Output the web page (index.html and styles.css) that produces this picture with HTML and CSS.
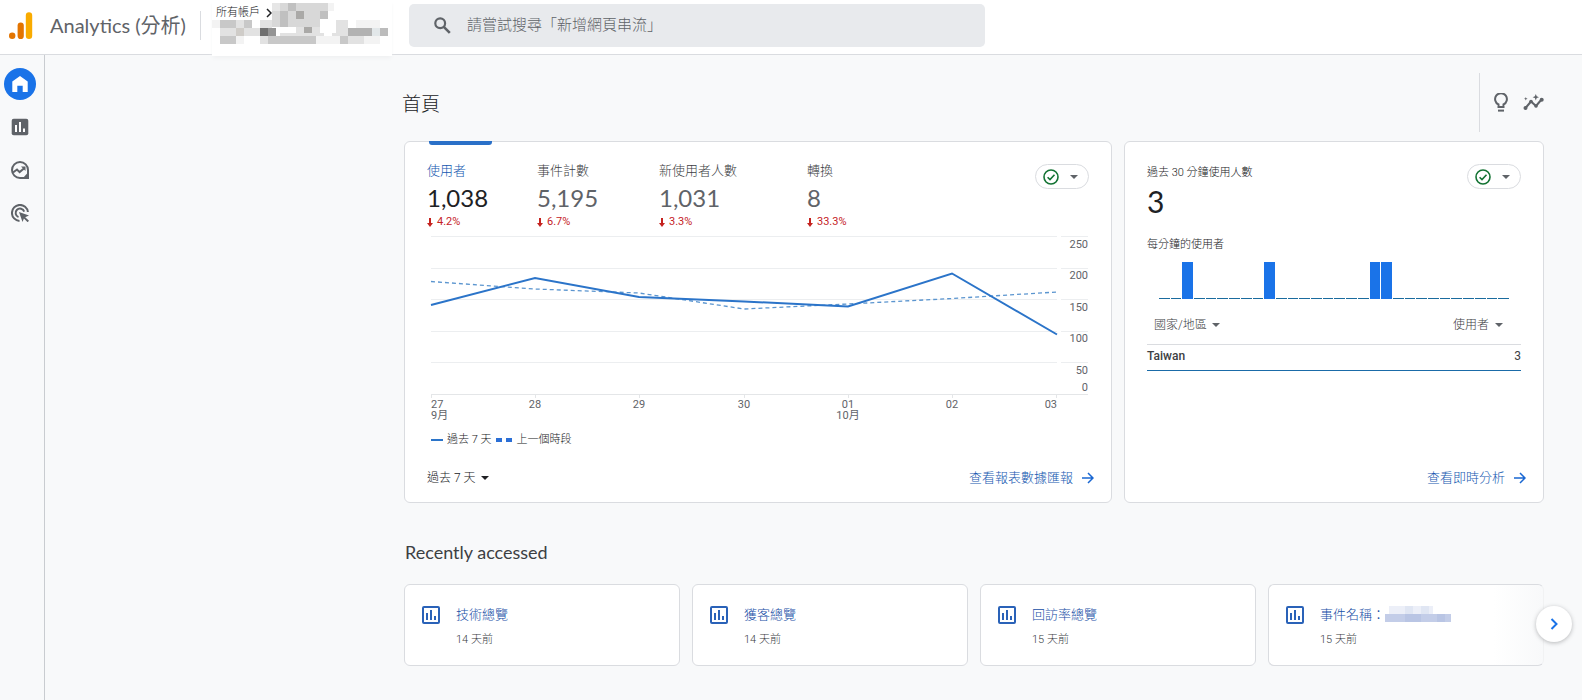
FILE: index.html
```html
<!DOCTYPE html>
<html lang="zh-Hant">
<head>
<meta charset="utf-8">
<title>Analytics (分析)</title>
<meta name="viewport" content="width=device-width, initial-scale=1">
<link rel="stylesheet" href="styles.css">
</head>
<body>
<svg class="defs" aria-hidden="true">
  <symbol id="caret" viewBox="0 0 8 4"><path d="M0 0h8L4 4z" fill="currentColor"/></symbol>
  <symbol id="arrow" viewBox="0 0 12 12"><path d="M0 6h11M6 1l5 5-5 5" fill="none" stroke="currentColor" stroke-width="1.5"/></symbol>
  <symbol id="down" viewBox="0 0 6 9"><path d="M2 0h2v5H6L3 9 0 5h2z" fill="currentColor"/></symbol>
  <symbol id="check" viewBox="0 0 16 16"><circle cx="8" cy="8" r="7" fill="none" stroke="currentColor" stroke-width="1.6"/><path d="M4.6 8.2l2.4 2.4 4.5-4.8" fill="none" stroke="currentColor" stroke-width="1.6"/></symbol>
  <symbol id="report" viewBox="0 0 18 18"><rect x="1" y="1" width="16" height="16" rx="1" fill="none" stroke="currentColor" stroke-width="2"/><path d="M4 7h2v7H4zM8 4h2v10H8zM12 10h2v4h-2z" fill="currentColor"/></symbol>
</svg>

<header class="topbar">
  <a class="brand" href="#">
    <svg class="brand-logo" viewBox="0 0 24 28" aria-hidden="true"><circle cx="3.2" cy="23.7" r="3.2" fill="#e37400"/><rect x="8.6" y="10.5" width="6.2" height="16.5" rx="3.1" fill="#e37400"/><rect x="16.8" y="0.3" width="6.4" height="26.7" rx="3.2" fill="#f9ab00"/></svg>
    <span>Analytics (分析)</span>
  </a>
  <button class="account" type="button">
    <span class="account-path">所有帳戶
      <svg class="account-chevron" viewBox="0 0 6 10" aria-hidden="true"><path d="M1 1l4 4-4 4" fill="none" stroke="currentColor" stroke-width="1.5"/></svg>
    </span>
    <svg class="account-mask" viewBox="0 0 180 44" shape-rendering="crispEdges" aria-hidden="true">
      <g fill="#c8c8c8"><rect x="8" y="20" width="16" height="8"/><rect x="32" y="20" width="8" height="8"/><rect x="8" y="36" width="16" height="8"/><rect x="56" y="36" width="48" height="8"/><rect x="128" y="36" width="8" height="8"/></g>
      <g fill="#e2e2e2"><rect x="24" y="20" width="8" height="8"/><rect x="8" y="28" width="16" height="8"/><rect x="32" y="28" width="8" height="8"/><rect x="40" y="28" width="8" height="8"/><rect x="48" y="20" width="12" height="8"/><rect x="68" y="27" width="44" height="9"/><rect x="120" y="28" width="20" height="8"/><rect x="124" y="20" width="12" height="8"/><rect x="48" y="36" width="8" height="8"/><rect x="136" y="36" width="16" height="8"/></g>
      <g fill="#f3f3f3"><rect x="0" y="20" width="8" height="8"/><rect x="24" y="36" width="8" height="8"/><rect x="104" y="36" width="24" height="8"/><rect x="144" y="20" width="24" height="8"/><rect x="152" y="36" width="16" height="8"/><rect x="112" y="3" width="10" height="8"/></g>
      <rect x="24" y="28" width="8" height="8" fill="#cfccc8"/>
      <rect x="48" y="28" width="8" height="8" fill="#707070"/><rect x="56" y="28" width="8" height="8" fill="#949494"/>
      <rect x="136" y="28" width="24" height="8" fill="#b2b2b2"/><rect x="160" y="28" width="8" height="8" fill="#e2e7e9"/><rect x="168" y="28" width="8" height="8" fill="#bcbcbc"/>
      <rect x="60" y="3" width="56" height="24" fill="#d8d8d8"/>
      <g fill="#c0c0c0"><rect x="76" y="3" width="8" height="8"/><rect x="68" y="11" width="8" height="8"/><rect x="68" y="19" width="8" height="8"/><rect x="108" y="11" width="8" height="8"/></g>
      <g fill="#aaa9a7"><rect x="84" y="11" width="8" height="8"/><rect x="92" y="27" width="8" height="6"/></g>
      <rect x="60" y="3" width="8" height="8" fill="#e6e6e6"/>
      <rect x="68" y="27" width="16" height="6" fill="#fff"/><rect x="108" y="19" width="16" height="14" fill="#fff"/>
    </svg>
  </button>
  <form class="search" role="search">
    <svg class="search-icon" viewBox="0 0 17 17" aria-hidden="true"><circle cx="6.2" cy="6.2" r="4.9" fill="none" stroke="currentColor" stroke-width="2.2"/><path d="M9.8 9.8l6 6" stroke="currentColor" stroke-width="2.6"/></svg>
    <input class="search-input" type="search" aria-label="搜尋" placeholder="請嘗試搜尋「新增網頁串流」">
  </form>
</header>

<div class="shell">
  <nav class="rail" aria-label="主選單">
    <a class="rail-item rail-item-active" href="#" aria-label="首頁"><svg class="rail-icon" viewBox="0 0 18 18" aria-hidden="true"><path d="M1.3 17V6.4L9 1l7.700 5.400V17H11.700V10.700H6.300V17z" fill="currentColor"/></svg></a>
    <a class="rail-item" href="#" aria-label="報表"><svg class="rail-icon" viewBox="0 0 18 18" aria-hidden="true"><rect x=".7" y=".7" width="16.600" height="16.600" rx="2" fill="#5f6368"/><path d="M4 7h2v7H4zM8 4h2v10H8zM12 10.500h2V14h-2z" fill="#fff"/></svg></a>
    <a class="rail-item" href="#" aria-label="探索"><svg class="rail-icon" viewBox="0 0 18 18" aria-hidden="true"><path d="M9 1a8 8 0 1 0 0 16h8V9a8 8 0 0 0-8-8z" fill="none" stroke="currentColor" stroke-width="2"/><path d="M16.500 12v5H12z" fill="currentColor"/><path d="M2 11.500l4-3 2.600 2.600L13.500 7" fill="none" stroke="currentColor" stroke-width="2"/><path d="M10 5.500h4.500V10z" fill="currentColor"/></svg></a>
    <a class="rail-item" href="#" aria-label="廣告"><svg class="rail-icon" viewBox="0 0 18 18" aria-hidden="true"><path d="M8.500 16.900A8 8 0 1 1 16.900 8" fill="none" stroke="currentColor" stroke-width="2"/><path d="M7.500 13.100A4.400 4.400 0 1 1 13.200 7.600" fill="none" stroke="currentColor" stroke-width="2"/><path d="M8 8l10 3.500-3.800 1.700 3.800 3.600-1.400 1.400-3.700-3.700L11.500 18z" fill="currentColor"/></svg></a>
  </nav>

  <main class="page">
    <div class="page-head">
      <h1 class="page-title">首頁</h1>
      <div class="page-tools">
        <button class="tool" type="button" aria-label="提示"><svg class="tool-bulb" viewBox="0 0 14 19" aria-hidden="true"><path d="M4.500 14v-2.500A5.900 5.900 0 1 1 9.500 11.500V14z" fill="none" stroke="currentColor" stroke-width="2"/><path d="M4 17.600h6" stroke="currentColor" stroke-width="2"/></svg></button>
        <button class="tool" type="button" aria-label="深入分析"><svg class="tool-insights" viewBox="0 0 21 17" aria-hidden="true"><path d="M2.500 14l5.500-6.500 5 4.500 5.500-6.500" fill="none" stroke="currentColor" stroke-width="2"/><g fill="currentColor"><circle cx="2.500" cy="14" r="2"/><circle cx="8" cy="7.500" r="1.800"/><circle cx="13" cy="12" r="1.800"/><circle cx="18.700" cy="5.800" r="2"/><path d="M12.800 0l.9 2.300 2.300.9-2.300.9-.9 2.300-.9-2.300-2.300-.9 2.300-.9zM2.800 3l.5 1.300 1.300.5-1.300.5-.5 1.300-.5-1.300L1 4.800l1.300-.5z"/></g></svg></button>
      </div>
    </div>

    <div class="cards">
      <section class="card overview">
        <div class="overview-head">
          <div class="metrics" role="tablist">
            <button class="metric metric-active" type="button" role="tab" aria-selected="true"><span class="metric-label">使用者</span><span class="metric-value">1,038</span><span class="metric-delta"><svg class="down" aria-hidden="true"><use href="#down"/></svg>4.2%</span></button>
            <button class="metric" type="button" role="tab"><span class="metric-label">事件計數</span><span class="metric-value">5,195</span><span class="metric-delta"><svg class="down" aria-hidden="true"><use href="#down"/></svg>6.7%</span></button>
            <button class="metric" type="button" role="tab"><span class="metric-label">新使用者人數</span><span class="metric-value">1,031</span><span class="metric-delta"><svg class="down" aria-hidden="true"><use href="#down"/></svg>3.3%</span></button>
            <button class="metric" type="button" role="tab"><span class="metric-label">轉換</span><span class="metric-value">8</span><span class="metric-delta"><svg class="down" aria-hidden="true"><use href="#down"/></svg>33.3%</span></button>
          </div>
          <button class="status" type="button" aria-label="資料狀態"><svg class="status-check" aria-hidden="true"><use href="#check"/></svg><svg class="caret" aria-hidden="true"><use href="#caret"/></svg></button>
        </div>
        <svg class="trend" viewBox="0 0 662 190" role="img" aria-label="過去 7 天的使用者">
          <path class="grid" d="M4 1.500h626M634 1.500h27M4 33.500h626M634 33.500h27M4 64.500h626M634 64.500h27M4 96.500h626M634 96.500h27M4 127.500h626M634 127.500h27"/>
          <path class="axis" d="M4 159.500h657M4.500 159v4M108.500 159v4M212.500 159v4M317.500 159v4M421.500 159v4M525.500 159v4M629.500 159v4"/>
          <path class="line-prev" d="M4 46.500L108 54L212 58L317 74L421 69L525 63.500L630 57"/>
          <path class="line-now" d="M4 70L108 43L212 62L317 66.500L421 71.500L525 38.500L630 99.500"/>
          <g class="ticks ticks-end"><text x="661" y="13">250</text><text x="661" y="44">200</text><text x="661" y="76">150</text><text x="661" y="107">100</text><text x="661" y="139">50</text><text x="661" y="156">0</text><text x="630" y="173">03</text></g>
          <g class="ticks"><text x="4" y="173">27</text><text x="4" y="184">9月</text></g>
          <g class="ticks ticks-mid"><text x="108" y="173">28</text><text x="212" y="173">29</text><text x="317" y="173">30</text><text x="421" y="173">01</text><text x="421" y="184">10月</text><text x="525" y="173">02</text></g>
        </svg>
        <div class="legend">
          <span class="legend-item"><i class="key"></i>過去 7 天</span>
          <span class="legend-item"><i class="key key-dashed"></i>上一個時段</span>
        </div>
        <div class="card-foot">
          <label class="picker"><select class="picker-select" aria-label="日期範圍"><option>過去 7 天</option></select><svg class="caret" aria-hidden="true"><use href="#caret"/></svg></label>
          <a class="more" href="#">查看報表數據匯報<svg class="arrow" aria-hidden="true"><use href="#arrow"/></svg></a>
        </div>
      </section>

      <section class="card realtime">
        <div class="realtime-head">
          <div>
            <h2 class="realtime-label">過去 30 分鐘使用人數</h2>
            <p class="realtime-value">3</p>
          </div>
          <button class="status" type="button" aria-label="資料狀態"><svg class="status-check" aria-hidden="true"><use href="#check"/></svg><svg class="caret" aria-hidden="true"><use href="#caret"/></svg></button>
        </div>
        <h3 class="realtime-label">每分鐘的使用者</h3>
        <div class="minutes">
          <i></i><i></i><i class="on"></i><i></i><i></i><i></i><i></i><i></i><i></i><i class="on"></i><i></i><i></i><i></i><i></i><i></i><i></i><i></i><i></i><i class="on"></i><i class="on"></i><i></i><i></i><i></i><i></i><i></i><i></i><i></i><i></i><i></i><i></i>
        </div>
        <table class="countries">
          <thead><tr>
            <th><label class="picker picker-soft"><select class="picker-select" aria-label="維度"><option>國家/地區</option></select><svg class="caret" aria-hidden="true"><use href="#caret"/></svg></label></th>
            <th class="num"><label class="picker picker-soft"><select class="picker-select" aria-label="指標"><option>使用者</option></select><svg class="caret" aria-hidden="true"><use href="#caret"/></svg></label></th>
          </tr></thead>
          <tbody><tr><td class="country">Taiwan</td><td class="num">3</td></tr></tbody>
        </table>
        <div class="card-foot card-foot-end">
          <a class="more" href="#">查看即時分析<svg class="arrow" aria-hidden="true"><use href="#arrow"/></svg></a>
        </div>
      </section>
    </div>

    <h2 class="recent-title">Recently accessed</h2>
    <div class="recent">
      <a class="card recent-card" href="#"><svg class="recent-icon" aria-hidden="true"><use href="#report"/></svg><span><span class="recent-name">技術總覽</span><span class="recent-time">14 天前</span></span></a>
      <a class="card recent-card" href="#"><svg class="recent-icon" aria-hidden="true"><use href="#report"/></svg><span><span class="recent-name">獲客總覽</span><span class="recent-time">14 天前</span></span></a>
      <a class="card recent-card" href="#"><svg class="recent-icon" aria-hidden="true"><use href="#report"/></svg><span><span class="recent-name">回訪率總覽</span><span class="recent-time">15 天前</span></span></a>
      <a class="card recent-card" href="#"><svg class="recent-icon" aria-hidden="true"><use href="#report"/></svg><span><span class="recent-name">事件名稱：<svg class="name-mask" viewBox="0 0 68 16" shape-rendering="crispEdges" aria-hidden="true"><path d="M4 0h44v8H4z" fill="#eceff8"/><path d="M20 0h8v8h-8zM36 0h8v8h-8z" fill="#e0e6f3"/><path d="M0 8h66v8H0z" fill="#c3cde8"/><path d="M20 8h16v8H20zM52 8h8v8h-8z" fill="#b9c5e4"/></svg></span><span class="recent-time">15 天前</span></span></a>
      <button class="next" type="button" aria-label="下一頁"><svg class="next-icon" viewBox="0 0 8 12" aria-hidden="true"><path d="M1.500 1l5 5-5 5" fill="none" stroke="currentColor" stroke-width="2"/></svg></button>
    </div>
  </main>
</div>
</body>
</html>
```
FILE: styles.css
```css
* { box-sizing: border-box; }

body {
  margin: 0;
  min-height: 100vh;
  display: flex;
  flex-direction: column;
  background: #f8f9fa;
  color: #202124;
  font: 300 13px/18px Roboto, "Noto Sans CJK TC", sans-serif;
}

h1, h2, h3, p { margin: 0; font-weight: 300; }
a { color: inherit; text-decoration: none; }
button, input, select { font: inherit; color: inherit; }
button { padding: 0; border: 0; background: none; text-align: left; cursor: pointer; }
svg { display: block; flex: none; }
.defs { position: absolute; width: 0; height: 0; }

.topbar {
  display: flex;
  align-items: flex-start;
  height: 55px;
  background: #fff;
  border-bottom: 1px solid #dadce0;
}
.brand {
  display: flex;
  align-items: center;
  gap: 17px;
  width: 201px;
  height: 29px;
  margin-top: 11px;
  padding-left: 9px;
  border-right: 1px solid #dadce0;
  color: #5f6368;
  font: 400 20px/28px Lato, "Noto Sans CJK TC", sans-serif;
  white-space: nowrap;
}
.brand-logo { width: 24px; height: 28px; }
.brand span { padding-bottom: 2px; }
.account {
  position: relative;
  display: flex;
  flex-direction: column;
  width: 180px;
  height: 56px;
  margin: 0 17px 0 11px;
  padding: 3px 0 0 4px;
  background: #fff;
  box-shadow: 0 3px 4px -1px #eff0f1;
}
.account-path {
  display: flex;
  align-items: center;
  gap: 6px;
  height: 20px;
  color: #202124;
  font-size: 11px;
}
.account-chevron { width: 6px; height: 10px; }
.account-mask { position: absolute; left: 0; top: 0; width: 180px; height: 44px; }

.search {
  display: flex;
  align-items: center;
  gap: 16px;
  width: 576px;
  height: 43px;
  margin-top: 4px;
  padding: 0 25px;
  border-radius: 5px;
  background: #e8eaed;
  color: #5f6368;
}
.search-icon { width: 17px; height: 17px; }
.search-input {
  flex: 1;
  padding: 0 0 1px;
  border: 0;
  outline: 0;
  background: none;
  font-size: 15px;
}
.search-input::placeholder { color: #5f6368; }

.shell { display: flex; flex: 1; }
.rail {
  display: flex;
  flex-direction: column;
  gap: 11px;
  width: 45px;
  padding: 13px 0 0 4px;
  border-right: 1px solid #c9ccd0;
}
.rail-item {
  display: grid;
  place-items: center;
  width: 32px;
  height: 32px;
  border-radius: 50%;
  color: #5f6368;
}
.rail-item-active { background: #1a73e8; color: #fff; }
.rail-icon { width: 18px; height: 18px; }

.page { flex: 1; min-width: 0; padding: 18px 38px 34px 359px; }
.page-head {
  display: flex;
  align-items: center;
  justify-content: space-between;
  height: 59px;
  margin: 0 0 9px -2px;
}
.page-title { padding-top: 4px; font-size: 19px; line-height: 28px; }
.page-tools {
  display: flex;
  align-items: center;
  gap: 15px;
  height: 59px;
  padding-left: 14px;
  border-left: 1px solid #dadce0;
  color: #5f6368;
}
.tool-bulb { width: 14px; height: 19px; }
.tool-insights { width: 21px; height: 17px; }

.cards { display: grid; grid-template-columns: 708fr 420fr; gap: 12px; }
.card {
  display: flex;
  flex-direction: column;
  min-width: 0;
  background: #fff;
  border: 1px solid #dadce0;
  border-radius: 6px;
}
.overview { min-height: 362px; padding: 0 22px 12px 22px; }
.overview-head { display: flex; justify-content: space-between; align-items: flex-start; }
.metrics { display: grid; grid-template-columns: 110px 122px 148px auto; }
.metric { position: relative; padding-top: 20px; color: #5f6368; }
.metric-active::before {
  content: "";
  position: absolute;
  left: 2px;
  top: -1px;
  width: 63px;
  height: 4px;
  border-radius: 0 0 3px 3px;
  background: #2a70c8;
}
.metric-label { display: block; color: #3c4043; line-height: 18px; }
.metric-value { display: block; font: 400 24px/35px Lato, sans-serif; }
.metric-active .metric-label { color: #1558b0; }
.metric-active .metric-value { color: #202124; }
.metric-delta {
  display: flex;
  align-items: center;
  gap: 4px;
  color: #c5221f;
  font-size: 11px;
  font-weight: 400;
  line-height: 14px;
}
.down { width: 6px; height: 9px; }

.status {
  display: flex;
  align-items: center;
  justify-content: space-between;
  width: 54px;
  height: 25px;
  margin-top: 22px;
  padding: 0 10px 0 7px;
  border: 1px solid #dadce0;
  border-radius: 13px;
  color: #5f6368;
}
.status-check { width: 16px; height: 16px; color: #137333; }
.caret { width: 8px; height: 4px; }

.trend { width: 100%; height: auto; margin-top: 6px; }
.grid { stroke: #eceef0; fill: none; }
.axis { stroke: #e4e6e8; fill: none; }
.line-now { fill: none; stroke: #2b74c9; stroke-width: 2; }
.line-prev { fill: none; stroke: #5b95cf; stroke-width: 1.3; stroke-dasharray: 4 3; }
.ticks { fill: #5f6368; font-size: 11px; font-weight: 400; }
.ticks-mid { text-anchor: middle; }
.ticks-end { text-anchor: end; }

.legend {
  display: flex;
  gap: 5px;
  margin-top: 7px;
  padding-left: 4px;
  font-size: 11px;
  line-height: 16px;
}
.legend-item { display: flex; align-items: center; gap: 4px; }
.key { width: 12px; height: 2px; background: #2b74c9; }
.key-dashed {
  width: 16px;
  height: 4px;
  background: linear-gradient(90deg, #2b6fd6 6px, transparent 6px 10px, #2b6fd6 10px);
}

.card-foot {
  display: flex;
  align-items: center;
  justify-content: space-between;
  height: 24px;
  margin: auto -5px 0 0;
}
.card-foot-end { justify-content: flex-end; }
.more { display: flex; align-items: center; gap: 9px; color: #1558b0; }
.arrow { width: 12px; height: 12px; color: #1967d2; }
.picker { display: inline-flex; align-items: center; gap: 5px; font-size: 12px; }
.picker-select {
  appearance: none;
  padding: 0;
  border: 0;
  background: none;
  font-size: 12px;
  line-height: 18px;
}
.picker-soft { color: #3c4043; }
.picker-soft .caret { color: #5f6368; }

.realtime { padding: 0 22px 12px 22px; }
.realtime-head { display: flex; justify-content: space-between; align-items: flex-start; height: 95px; }
.realtime-label { color: #202124; font-size: 11px; line-height: 16px; }
.realtime-head .realtime-label { margin-top: 23px; }
.realtime-value { font: 400 30px/40px Lato, sans-serif; }
.minutes {
  display: grid;
  grid-template-columns: repeat(30, 1fr);
  column-gap: 1px;
  align-items: end;
  height: 37px;
  margin: 9px 12px 0;
}
.minutes i { height: 1px; background: #1a6b9e; }
.minutes .on { height: 37px; background: #1a73e8; }

.countries {
  width: 100%;
  margin-top: 8px;
  border-collapse: collapse;
  color: #3c4043;
  font-size: 12px;
  font-weight: 400;
}
.countries th { height: 37px; padding: 0 7px; border-bottom: 1px solid #dadce0; font-weight: 300; text-align: left; }
.countries th.num { padding-right: 18px; }
.countries td { height: 26px; padding: 0 0 2px; border-bottom: 1px solid #1a6ba8; }
.countries .num { text-align: right; }
.country { font-weight: 500; }

.recent-title { margin: 37px 0 20px 1px; color: #3c4043; font: 400 18px/24px Lato, sans-serif; }
.recent { position: relative; display: grid; grid-template-columns: repeat(4, 1fr); gap: 12px; }
.recent-card {
  flex-direction: row;
  align-items: flex-start;
  gap: 16px;
  height: 82px;
  padding: 21px 17px;
}
.recent-card:last-of-type {
  border-right-color: #f1f2f3;
  background: linear-gradient(90deg, #fff 82%, #f8f9fa);
}
.recent-icon { width: 18px; height: 18px; color: #2a62b8; }
.recent-name { display: flex; color: #174ea6; line-height: 18px; }
.recent-time { display: block; margin-top: 8px; color: #3c4043; font-size: 11px; line-height: 16px; }
.name-mask { width: 68px; height: 16px; }
.next {
  position: absolute;
  right: -28px;
  top: 22px;
  display: grid;
  place-items: center;
  width: 36px;
  height: 36px;
  border-radius: 50%;
  background: #fff;
  box-shadow: 0 1px 4px rgba(60, 64, 67, .35);
  color: #1a73e8;
}
.next-icon { width: 8px; height: 12px; }
```
